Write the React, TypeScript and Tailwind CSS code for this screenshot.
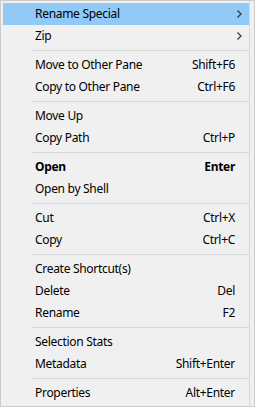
import React from 'react';

type Item =
  | { kind: 'item'; label: string; shortcut?: string; submenu?: boolean; bold?: boolean; active?: boolean }
  | { kind: 'sep' };

const items: Item[] = [
  { kind: 'item', label: 'Rename Special', submenu: true, active: true },
  { kind: 'item', label: 'Zip', submenu: true },
  { kind: 'sep' },
  { kind: 'item', label: 'Move to Other Pane', shortcut: 'Shift+F6' },
  { kind: 'item', label: 'Copy to Other Pane', shortcut: 'Ctrl+F6' },
  { kind: 'sep' },
  { kind: 'item', label: 'Move Up' },
  { kind: 'item', label: 'Copy Path', shortcut: 'Ctrl+P' },
  { kind: 'sep' },
  { kind: 'item', label: 'Open', shortcut: 'Enter', bold: true },
  { kind: 'item', label: 'Open by Shell' },
  { kind: 'sep' },
  { kind: 'item', label: 'Cut', shortcut: 'Ctrl+X' },
  { kind: 'item', label: 'Copy', shortcut: 'Ctrl+C' },
  { kind: 'sep' },
  { kind: 'item', label: 'Create Shortcut(s)' },
  { kind: 'item', label: 'Delete', shortcut: 'Del' },
  { kind: 'item', label: 'Rename', shortcut: 'F2' },
  { kind: 'sep' },
  { kind: 'item', label: 'Selection Stats' },
  { kind: 'item', label: 'Metadata', shortcut: 'Shift+Enter' },
  { kind: 'sep' },
  { kind: 'item', label: 'Properties', shortcut: 'Alt+Enter' },
];

const Chevron = () => (
  <svg width="5" height="8" viewBox="0 0 5 8" className="shrink-0 ml-[1px]">
    <path d="M0.5 0.5 L4 4 L0.5 7.5" fill="none" stroke="#333" strokeWidth="1.2" />
  </svg>
);

export default function App() {
  return (
    <div className="w-[255px] h-[407px] bg-[#f0f0f0] border border-[#cccccc] font-['Noto_Sans',_'Liberation_Sans',_sans-serif] text-[12px] tracking-[-0.3px] text-black">
      <div className="flex h-full">
        {/* menu column */}
        <div className="w-[248px] flex flex-col pt-[2px] pl-[2px]">
          {items.map((it, i) =>
            it.kind === 'sep' ? (
              <div key={i} className="h-[7px] flex items-center pl-[29px]">
                <div className="h-px w-full bg-[#d7d7d7]" />
              </div>
            ) : (
              <div
                key={i}
                className={`h-[22px] flex items-center pl-[32px] pr-[7px] ${
                  it.active ? 'bg-[#91c9f7]' : ''
                } ${it.bold ? 'font-bold' : ''}`}
              >
                <span className="flex-1 whitespace-nowrap">{it.label}</span>
                {it.shortcut && <span className="whitespace-nowrap pr-[7px]">{it.shortcut}</span>}
                {it.submenu && <Chevron />}
              </div>
            )
          )}
        </div>
        {/* right gutter */}
        <div className="w-px bg-[#d9d9d9]" />
      </div>
    </div>
  );
}
